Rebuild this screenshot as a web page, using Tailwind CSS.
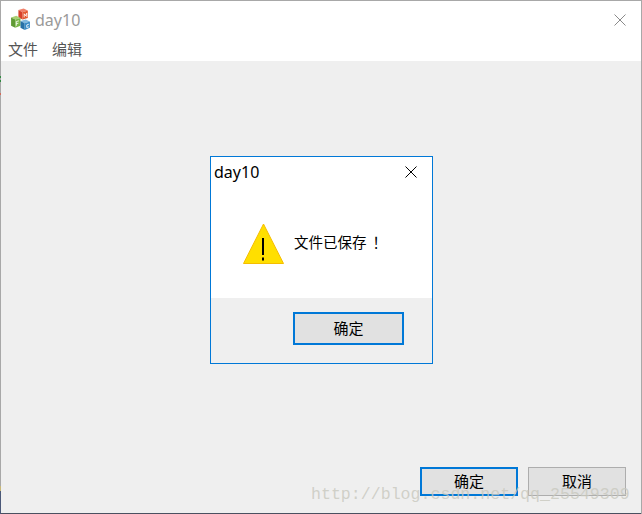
<!DOCTYPE html>
<html lang="zh">
<head>
  <meta charset="UTF-8" />
  <title>day10</title>
  <script src="https://cdn.jsdelivr.net/npm/@tailwindcss/browser@4"></script>
</head>
<body class="bg-[#efefef] overflow-hidden">
  <!-- main window -->
  <div class="relative w-[642px] h-[514px] flex flex-col border-x border-t border-[#a8a8a8] font-['Noto_Sans','Noto_Sans_CJK_SC',sans-serif]">
    <div class="bg-white h-[60px] flex flex-col">
      <div class="h-[37px] flex items-center pl-[8px] pr-[14px]">
        <svg width="23" height="23" viewBox="0 0 22 22" class="mr-[3px]">
          <path d="M9 2l5-1.500 4 2-5 1.500z" fill="#f0806a" />
          <path d="M9 2l4 2v7l-4-2z" fill="#d8402a" />
          <path d="M13 4l5-1.500v7L13 11z" fill="#e4572e" />
          <path d="M2 9l5-1.500 4 2-5 1.500z" fill="#a8cf72" />
          <path d="M2 9l4 2v8l-4-2z" fill="#5f9a34" />
          <path d="M6 11l5-1.500v7.500L6 19z" fill="#7ab648" />
          <path d="M11 12.500l5-1.500 4 2-5 1.500z" fill="#7fb8de" />
          <path d="M11 12.500l4 2V21l-4-2z" fill="#2670a6" />
          <path d="M15 14.500l5-1.500v6l-5 2z" fill="#3a8cc6" />
          <path d="M14.500 5.500v3.500M17 5v3.500M14.500 5.500l1.200 2 1.300-2.500" stroke="#fff" stroke-width="0.8" fill="none" />
          <path d="M7 13v4M7 13l2.500-.7M7 15l2-.5" stroke="#fff" stroke-width="0.8" fill="none" />
          <path d="M19 15.500l-2 .7v2.500l2-.7" stroke="#fff" stroke-width="0.8" fill="none" />
        </svg>
        <span class="text-[16px] text-[#9a9a9a] leading-none">day10</span>
        <svg width="14" height="14" viewBox="0 0 14 14" class="ml-auto" stroke="#8a8a8a" fill="none">
          <path d="M1.500 1.500l11 11M12.500 1.500l-11 11" />
        </svg>
      </div>
      <div class="flex gap-[14px] pl-[7px] text-[15px] leading-[23px] text-[#555]">
        <span>文件</span>
        <span>编辑</span>
      </div>
    </div>

    <div class="flex-1 flex items-end justify-end gap-[10px] pr-[15px] pb-[17px] border-b border-[#4a5060]">
      <button class="w-[98px] h-[29px] bg-[#e1e1e1] border-2 border-[#0078d7] text-[15px] text-black">确定</button>
      <button class="w-[98px] h-[29px] bg-[#e1e1e1] border border-[#adadad] text-[15px] text-black">取消</button>
    </div>

    <!-- message dialog -->
    <div class="absolute left-[209px] top-[155px] w-[223px] h-[208px] flex flex-col border border-[#0078d7] bg-[#efefef]">
      <div class="bg-white h-[141px] flex flex-col">
        <div class="h-[30px] flex items-center pl-[3px] pr-[14px]">
          <span class="text-[16px] text-black leading-none">day10</span>
          <svg width="14" height="14" viewBox="0 0 14 14" class="ml-auto" stroke="#000" fill="none">
            <path d="M1.500 1.500l11 11M12.500 1.500l-11 11" />
          </svg>
        </div>
        <div class="flex-1 flex items-center pl-[32px] pt-[2px]">
          <svg width="41" height="41" viewBox="0 0 41 41">
            <path d="M20.500 1L40.500 40.500H0.500z" fill="#ffdf00" stroke="#f5bd00" />
            <path d="M20 15v17M20 34.500v3" stroke="#000" stroke-width="2" />
          </svg>
          <span class="ml-[10px] -mt-[2px] text-[14.500px] text-black">文件已保存<span class="ml-[6px]">！</span></span>
        </div>
      </div>
      <div class="flex justify-end pr-[28px] pt-[14px]">
        <button class="w-[111px] h-[33px] bg-[#e1e1e1] border-2 border-[#0078d7] text-[15px] text-black">确定</button>
      </div>
    </div>

    <!-- watermark -->
    <div class="absolute left-[310px] top-[486px] font-['Liberation_Mono',monospace] text-[16.600px] leading-none text-[#c8c8be]/80 whitespace-nowrap">http://blog.csdn.net/qq_25549309</div>

    <!-- stray pixels on the left edge from the desktop behind -->
    <div class="absolute -left-px top-[485px] w-px h-[5px] bg-[#c8b878]"></div>
    <div class="absolute -left-px top-[490px] w-px h-[23px] bg-[#4a5878]"></div>
    <div class="absolute -left-px top-[75px] w-px h-[2px] bg-[#2f8a3f]"></div>
    <div class="absolute -left-px top-[79px] w-px h-[2px] bg-[#2f8a3f]"></div>
    <div class="absolute -left-px top-[92px] w-px h-[2px] bg-[#d06a5a]"></div>
  </div>
</body>
</html>
